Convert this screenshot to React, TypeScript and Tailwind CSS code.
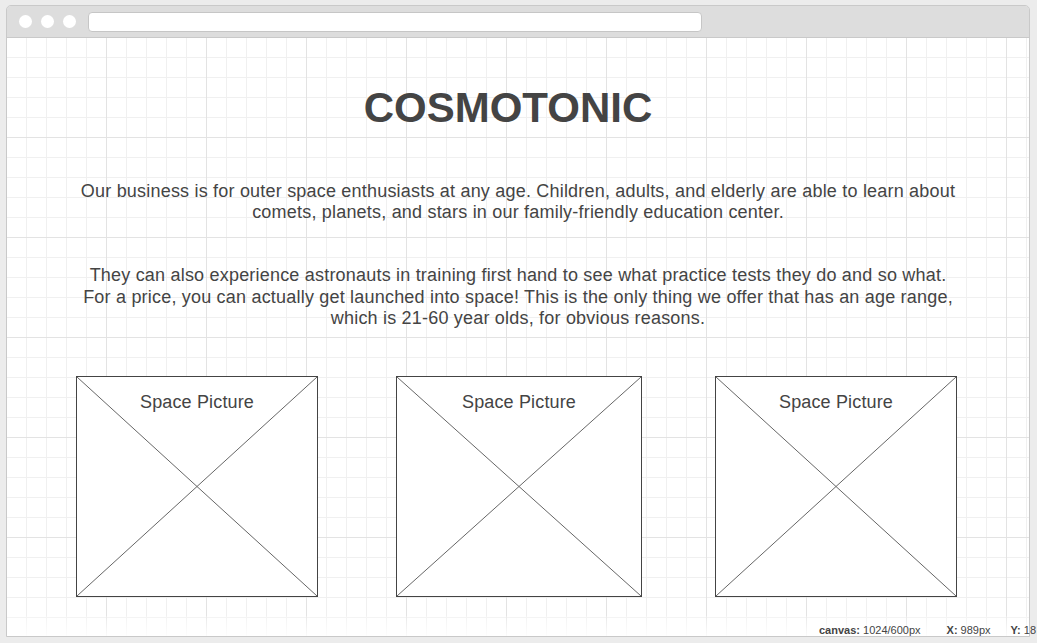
const pictures = ["Space Picture", "Space Picture", "Space Picture"];

function PictureBox({ label, className }: { label: string; className: string }) {
  return (
    <div className={`relative h-[221px] border border-[#444] bg-white ${className}`}>
      <svg
        className="absolute inset-0 h-full w-full"
        viewBox="0 0 100 100"
        preserveAspectRatio="none"
      >
        <line x1="0" y1="0" x2="100" y2="100" stroke="#666" strokeWidth="1" vectorEffect="non-scaling-stroke" />
        <line x1="100" y1="0" x2="0" y2="100" stroke="#666" strokeWidth="1" vectorEffect="non-scaling-stroke" />
      </svg>
      <p className="relative pt-[14px] text-center text-[18px] leading-[22px] tracking-[0.15px] text-[#444]">{label}</p>
    </div>
  );
}

export default function App() {
  return (
    <div className="relative h-[643px] w-[1037px] overflow-hidden bg-[#ececec] pl-[6px] pt-[5px] font-['Liberation_Sans',Arial,sans-serif]">
      <div className="flex h-[632px] w-[1024px] flex-col overflow-hidden rounded-t-[5px] border border-[#c9c9c9]">
        {/* title bar */}
        <div className="flex h-[32px] shrink-0 items-center border-b border-[#c9c9c9] bg-[#dddddd]">
          <div className="ml-[12px] flex gap-[9px]">
            <span className="h-[13px] w-[13px] rounded-full bg-white" />
            <span className="h-[13px] w-[13px] rounded-full bg-white" />
            <span className="h-[13px] w-[13px] rounded-full bg-white" />
          </div>
          <div className="ml-[12px] h-[20px] w-[614px] rounded-[4px] border border-[#c6c6c6] bg-white" />
        </div>

        {/* canvas */}
        <div className="relative flex-1 bg-white bg-[linear-gradient(to_right,#e3e3e3_1px,transparent_1px),linear-gradient(to_bottom,#e3e3e3_1px,transparent_1px),linear-gradient(to_right,#f0f0f0_1px,transparent_1px),linear-gradient(to_bottom,#f0f0f0_1px,transparent_1px)] bg-[length:100px_100px,100px_100px,20px_20px,20px_20px] bg-[position:-1px_-1px]">
          <h1 className="mt-[46px] pr-[20px] text-center text-[42px] font-bold leading-[48px] text-[#444]">
            COSMOTONIC
          </h1>

          <p className="mt-[49px] text-center text-[18px] leading-[21px] tracking-[0.2px] whitespace-nowrap text-[#444]">
            Our business is for outer space enthusiasts at any age. Children, adults, and elderly are able to learn about
            <br />
            comets, planets, and stars in our family-friendly education center.
          </p>

          <p className="mt-[42px] text-center text-[18px] leading-[21.5px] tracking-[0.2px] whitespace-nowrap text-[#444]">
            They can also experience astronauts in training first hand to see what practice tests they do and so what.
            <br />
            For a price, you can actually get launched into space! This is the only thing we offer that has an age range,
            <br />
            which is 21-60 year olds, for obvious reasons.
          </p>

          <div className="mt-[46.5px] flex pl-[69px]">
            <PictureBox label={pictures[0]} className="w-[242px]" />
            <PictureBox label={pictures[1]} className="ml-[78px] w-[246px]" />
            <PictureBox label={pictures[2]} className="ml-[73px] w-[242px]" />
          </div>

          <div className="absolute inset-x-0 bottom-0 h-[20px] bg-[linear-gradient(to_bottom,rgba(255,255,255,0.2),rgba(255,255,255,0.85))]" />
        </div>
      </div>

      {/* status readout */}
      <div className="absolute left-[819px] top-[624px] flex whitespace-nowrap text-[11px] leading-[13px] text-[#444]">
        <span>
          <b>canvas:</b> 1024/600px
        </span>
        <span className="ml-[26px]">
          <b>X:</b> 989px
        </span>
        <span className="ml-[20px]">
          <b>Y:</b> 18
        </span>
      </div>
    </div>
  );
}
